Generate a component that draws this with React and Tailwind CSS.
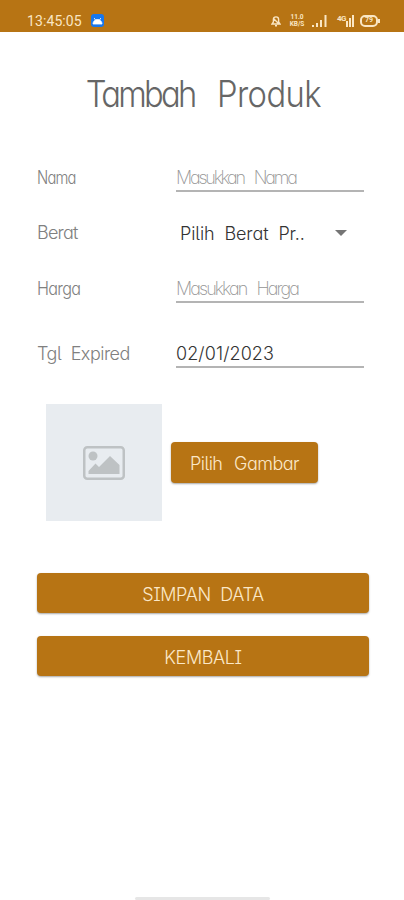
import { useState } from "react";

const Signal = () => (
  <svg className="w-[15px] h-3" viewBox="0 0 15 12" fill="#fae6c4">
    <rect x="0" y="10" width="2" height="2" />
    <rect x="4" y="8" width="2" height="4" />
    <rect x="8" y="5" width="2" height="7" />
    <rect x="12.5" y="0" width="2" height="12" />
  </svg>
);

const StatusBar = () => {
  return (
    <header className="h-8 pl-[27px] pr-[24px] pt-[9px] flex items-center bg-[#b77414] text-[#fae6c4]">
      <span className="w-[64px] text-[14px] leading-6 font-['Roboto',sans-serif] tracking-[0.1px]">
        13:45:05
      </span>
      <span className="w-[13px] h-[13px] rounded-[3px] bg-[#1677ee] flex items-center justify-center">
        <svg className="w-[11px] h-[8px]" viewBox="0 0 11 8">
          <path
            d="M1 7a4.5 4.5 0 0 1 9 0ZM2.2 1l1.2 2M8.8 1L7.6 3"
            fill="#fff"
            stroke="#fff"
            strokeWidth="0.8"
          />
        </svg>
      </span>
      <div className="ml-auto flex items-center">
        <svg
          className="w-[10px] h-3 mr-[7px]"
          viewBox="0 0 10 12"
          fill="none"
          stroke="#fae6c4"
          strokeWidth="1.4"
        >
          <path d="M1 9h8L7.6 7V4.5a2.6 2.6 0 0 0-5.2 0V7ZM4 10.8h2M2 3l6 6" />
        </svg>
        <span className="w-[18px] mr-[6px] flex flex-col items-center text-[6.5px] font-bold font-['Roboto',sans-serif]">
          <span className="h-[7px] leading-[7px]">11.0</span>
          <span className="h-[7px] leading-[7px]">KB/S</span>
        </span>
        <Signal />
        <span className="w-[9px] ml-[10px] h-3 text-[8px] leading-[8px] font-bold font-['Roboto',sans-serif] tracking-[-0.5px]">
          4G
        </span>
        <svg className="w-2 h-3 mr-[6px]" viewBox="0 0 8 12" fill="#fae6c4">
          <rect x="0" y="6" width="2" height="6" />
          <rect x="3" y="3" width="2" height="9" />
          <rect x="6" y="0" width="2" height="12" />
        </svg>
        <span className="w-[18px] h-3 rounded-[5px] border-2 border-[#fae6c4] flex items-center justify-center text-[7px] leading-none font-bold font-['Roboto',sans-serif]">
          79
        </span>
        <span className="w-[2px] h-1 bg-[#fae6c4]" />
      </div>
    </header>
  );
};

const Label = ({ className, children }) => (
  <span
    className={`w-[139px] shrink-0 -mt-px origin-left font-light text-[#808080] ${className}`}
  >
    {children}
  </span>
);

const Field = ({ className, ...props }) => (
  <input
    type="text"
    className={`w-[188px] h-[28px] pt-px border-b-2 border-[#b4b4b4] outline-none font-light text-[#333] placeholder:text-[#949494] placeholder:font-extralight ${className}`}
    {...props}
  />
);

const Button = ({ className, children }) => (
  <button
    type="button"
    className={`pt-[2px] rounded-[4px] bg-[#b77414] text-[#fbe8c8] font-light shadow-[0_1px_2px_rgba(0,0,0,0.35)] ${className}`}
  >
    {children}
  </button>
);

const App = () => {
  const [nama, setNama] = useState("");
  const [harga, setHarga] = useState("");
  const [tanggal, setTanggal] = useState("02/01/2023");

  return (
    <div className="w-[404px] h-[900px] flex flex-col bg-white overflow-hidden font-['Inter',sans-serif] [font-feature-settings:'cv11','cv05','cv08'] text-[18px]">
      <StatusBar />
      <h1 className="mt-[38px] pl-[3px] h-[48px] text-center leading-[48px] text-[37px] font-light text-[#666] [word-spacing:15px] whitespace-nowrap scale-x-[0.885]">
        <span className="tracking-[-3.1px]">Tambah</span>{" "}
        <span className="tracking-[-0.7px]">Produk</span>
      </h1>

      <form className="px-[37px] flex flex-col">
        <div className="mt-[46px] h-[28px] flex items-center">
          <Label className="tracking-[-1px] scale-x-[0.82]">Nama</Label>
          <Field
            className="tracking-[-2.2px] [word-spacing:7px]"
            value={nama}
            onChange={(event) => setNama(event.target.value)}
            placeholder="Masukkan Nama"
          />
        </div>
        <div className="mt-[27px] h-[28px] flex items-center">
          <Label className="tracking-[-0.8px]">Berat</Label>
          <button
            type="button"
            className="w-[167px] ml-[4px] flex items-center justify-between font-light text-[#333] tracking-[-0.1px] [word-spacing:5px]"
          >
            <span>Pilih Berat Pr..</span>
            <svg className="w-3 h-[6px]" viewBox="0 0 12 6" fill="#757575">
              <path d="M0 0h12L6 6Z" />
            </svg>
          </button>
        </div>
        <div className="mt-[28px] h-[28px] flex items-center">
          <Label className="tracking-[-0.8px] scale-x-[0.9]">Harga</Label>
          <Field
            className="tracking-[-1.9px] [word-spacing:7px]"
            value={harga}
            onChange={(event) => setHarga(event.target.value)}
            placeholder="Masukkan Harga"
          />
        </div>
        <div className="mt-[37px] h-[28px] flex items-center">
          <Label className="tracking-[-0.5px] [word-spacing:5px]">
            Tgl Expired
          </Label>
          <Field
            className="tracking-[0.1px]"
            value={tanggal}
            onChange={(event) => setTanggal(event.target.value)}
          />
        </div>

        <div className="mt-[36px] ml-[9px] flex items-center">
          <div className="w-[116px] h-[117px] mr-[9px] bg-[#e8ecf0] flex items-center justify-center">
            <svg className="w-[42px] h-[34px]" viewBox="0 0 42 34" fill="#bec2c4">
              <rect
                x="1.25"
                y="1.25"
                width="39.5"
                height="31.5"
                rx="3"
                fill="none"
                stroke="#bec2c4"
                strokeWidth="2.5"
              />
              <circle cx="10" cy="10" r="4.5" />
              <path d="M5.5 28v-3l7-7.5 3.5 3.5L27 10l9.5 9v9Z" />
            </svg>
          </div>
          <Button className="w-[147px] h-[41px] tracking-[-0.5px] [word-spacing:7px]">
            Pilih Gambar
          </Button>
        </div>

        <Button className="mt-[52px] w-[332px] h-[40px] tracking-[-0.4px] [word-spacing:5px]">
          SIMPAN DATA
        </Button>
        <Button className="mt-[23px] w-[332px] h-[40px] tracking-[-0.4px]">
          KEMBALI
        </Button>
      </form>

      <div className="mt-auto mx-auto w-[135px] h-[3px] rounded-full bg-[#e6e6e6]" />
    </div>
  );
};

export default App;
